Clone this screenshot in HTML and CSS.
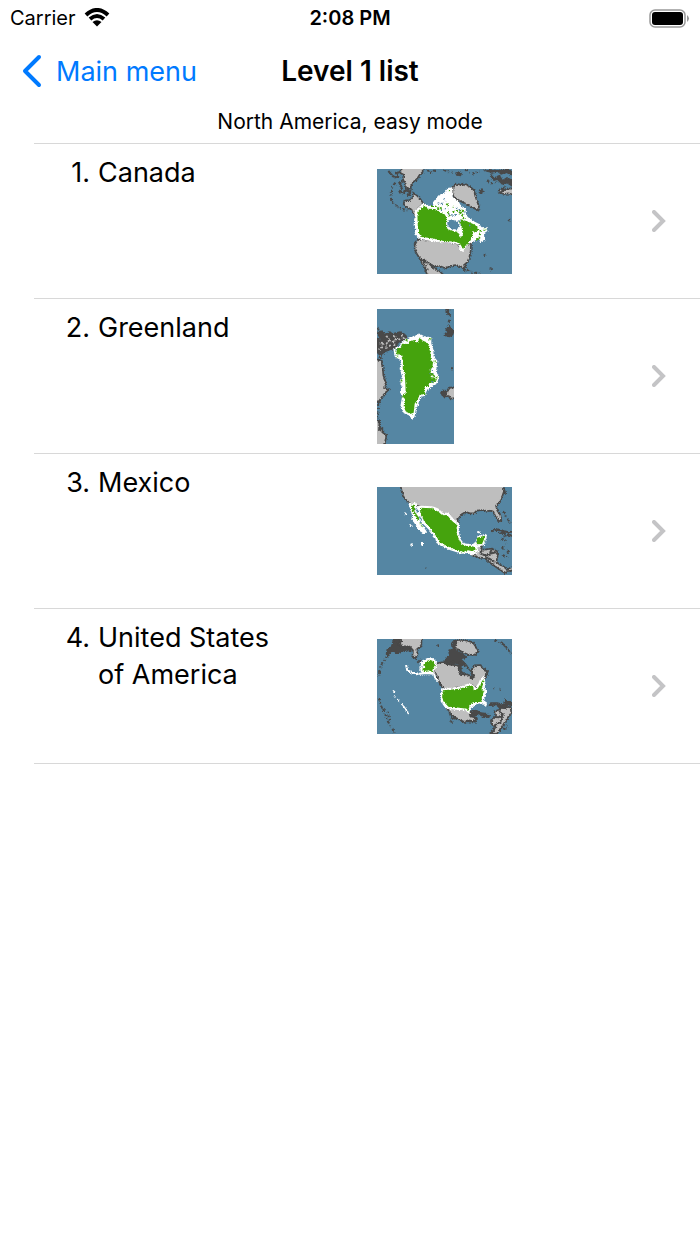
FILE: index.html
```
<!DOCTYPE html>
<html lang="en">
  <head>
    <meta charset="UTF-8" />
    <meta name="viewport" content="width=device-width, initial-scale=1.0" />
    <title>Level 1 list</title>
    <link rel="stylesheet" href="styles.css">
  </head>

  <body>
    <div class="status">
      <span class="carrier">Carrier
        <svg width="26" height="20" viewBox="0 0 26 20">
          <path class="arc" d="M2 7Q13-3 24 7M6 11Q13 5 20 11" />
          <path d="M8.500 14Q13 10.500 17.500 14L13 18.500Z" />
        </svg>
      </span>
      <strong class="time">2:08 PM</strong>
      <svg class="battery" width="41" height="19" viewBox="0 0 41 19">
        <rect x="1" y="1" width="35" height="17" rx="5" fill="none" stroke="#999" stroke-width="1.5" />
        <rect x="3" y="3" width="31" height="13" rx="3" />
        <path d="M38 6Q42 9.500 38 13Z" fill="#999" />
      </svg>
    </div>
    <nav class="navbar">
      <a class="back" href="#menu">
        <svg width="20" height="34" viewBox="0 0 20 34">
          <path d="M17 3L3 17L17 31" />
        </svg>
        Main menu
      </a>
      <h1>Level 1 list</h1>
    </nav>
    <main>
      <p class="subtitle">North America, easy mode</p>
      <ol class="countries">
        <li>
          <a class="row" href="#canada">
            <span class="num">1.</span>
            <span class="name">Canada</span>
            <svg class="map" width="135" height="105" viewBox="21 26 405 315">
              <!-- jagged coastlines, used by all four maps -->
              <filter id="rough" x="-5%" y="-5%" width="110%" height="110%">
                <feTurbulence type="turbulence" baseFrequency="0.25" numOctaves="2" seed="3" />
                <feDisplacementMap in="SourceGraphic" scale="4" xChannelSelector="R" yChannelSelector="G" />
              </filter>
              <path class="sea" d="M21 26H426V341H21Z" />
              <g class="coasts">
                <path class="land" d="M92 20L91 38L101 43L98 54L104 68L105 80L116 86L122 82L125 68L135 61L143 53L149 43L158 35L158 20Z" />
                <path class="coast" d="M55 32L66 45L75 51L84 48L77 37L91 35M98 60L88 67L96 83L89 93L102 97L105 86L116 96L121 91L119 101L111 105" />
                <path class="specks" d="M76 67L66 80L61 101L64 120L73 133L84 139L96 146L112 150" />
                <path class="land" d="M103 121L119 119L128 108L129 97L141 106L151 116L160 130L143 145L137 160L138 185L134 164L122 146L107 139L101 131Z" />
                <path class="land" d="M248 79L257 70L270 73L281 70L301 79L313 91L317 110L322 125L327 139L323 149L306 141L287 130L269 121L251 110L247 97Z" />
                <path class="dark" d="M255 37L267 33L276 39L273 48L259 46Z M327 88L337 83L341 94L332 101L326 98Z M363 39L374 50L389 43L398 58L411 50L430 60L430 81L410 69L396 73L382 59L371 62L359 47Z" />
                <path class="dark" d="M337 28L354 26L384 29L414 22L430 36L430 47L408 38L393 43L382 34L363 37L350 34Z" />
                <path class="land" d="M387 88L401 82L396 93L410 85L430 84V103L415 99L400 101L386 94Z" />
                <path class="specks" d="M172 26L178 37L190 31L199 31M220 30L247 35M285 27L302 42L328 32M350 60L366 68L376 65M414 181L423 171" />
                <path class="land" d="M145 235L134 248L134 268L143 285L149 294L161 298L173 306L184 313L195 318L210 317L224 323L239 317L256 314L275 320L283 327L281 315L292 305L298 290L302 273L303 249L308 242L290 252L275 266L260 248Z" />
                <path class="land" d="M149 295L161 319L173 346H223L207 331L188 320L177 309Z" />
                <path class="specks" d="M290 327L308 337L328 337M341 283L346 284M361 321L365 334M161 302L173 328M286 312L283 330" />
                <path class="white" d="M137 151L160 130L178 139L192 135L191 126L206 107L220 100L233 85L245 83L246 112L263 122L271 137L285 145L287 167L300 176L313 186L325 192L334 203L348 202L350 211L340 218L341 237L331 243L324 232L309 242L291 250L278 272L270 270L269 252L251 246L211 244L182 240L151 234L135 221L138 205L133 195Z" />
                <path class="green" d="M142 155L161 135L173 145L195 146L207 153L223 161L229 170L228 202L244 211L262 214L268 229L279 226L275 202L267 184L272 177L291 183L311 192L323 199L319 216L307 212L307 225L297 243L279 266L272 253L258 244L220 242L180 233L154 230L144 214Z" />
                <path class="green-specks" d="M183 137L201 137L206 146L215 142M229 130L235 135M237 90L240 91M231 153L238 168M247 153L265 151L276 164L279 150L269 148M278 175L287 169M318 207L332 211L327 237L314 234M340 208L346 208M248 139L251 139" />
                <path class="water outlined" d="M230 181L244 176L264 182L269 196L262 209L246 208L231 197Z" />
                <path class="water-specks" d="M203 128L223 130M212 148L232 144M222 112L224 124M234 160L249 165L265 160M258 141L272 151M266 180L271 193M285 153L282 164M297 197L304 190" />
              </g>
            </svg>
            <svg class="chevron" width="14" height="22" viewBox="0 0 14 22"><path d="M2 2L11 11L2 20" /></svg>
          </a>
        </li>
        <li>
          <a class="row" href="#greenland">
            <span class="num">2.</span>
            <span class="name">Greenland</span>
            <svg class="map" width="77" height="135" viewBox="21 27 231 405">
              <path class="sea" d="M21 27H252V432H21Z" />
              <g class="coasts">
                <path class="dark" d="M18 96L38 91L44 101L56 94L69 99L90 94L105 101L112 111L103 121L87 128L76 143L62 150L45 157L35 166L18 159V110L31 119Z" />
                <path class="grey-specks" d="M48 106L57 118L50 131L61 139M69 106L79 115L69 126L59 122M92 103L101 114L85 119M29 130L40 126L34 142L25 149M43 140L50 146M75 130L67 139" />
                <path class="land" d="M14 176L32 181L38 201L40 226L47 246L43 260L56 268L44 281L35 292L27 304H14Z" />
                <path class="land" d="M14 356L28 367L27 389L37 384L37 397L49 405L45 429L38 436H14Z" />
                <path class="specks" d="M22 82L27 91M26 171L39 171M25 309L22 340L28 367M46 249L41 269L55 267" />
                <path class="dark" d="M226 24L238 24L237 38L244 43L237 49L227 39Z M230 80L239 74L243 84L254 92L249 106L239 112L221 108L222 98L231 97Z" />
                <path class="specks" d="M238 59L234 74M225 86L242 103M243 203L246 207" />
                <path class="land" d="M258 262L237 263L231 274L218 271L213 279L222 290L236 288L241 296L258 294Z" />
                <path class="dark" d="M213 273L225 269L232 279L226 290L215 287Z" />
                <path class="white" d="M72 145L87 141L96 127L108 117L128 111L147 103L164 111L182 114L182 131L188 148L189 170L200 183L196 214L205 231L200 248L184 257L170 268L163 286L149 288L143 311L136 324L132 349L126 354L117 344L103 338L93 320L98 291L92 274L97 259L91 243L99 228L91 207L95 180L76 169Z" />
                <path class="green" d="M76 145L92 143L96 131L113 132L119 123L134 120L140 128L150 112L156 121L173 128L179 150L183 164L182 179L189 187L187 203L179 206L180 217L191 220L181 231L199 234L195 244L178 249L174 259L165 257L162 272L167 281L149 284L144 296L134 311L131 338L120 342L107 334L101 318L104 299L97 284L107 278L106 248L104 222L98 207L99 185L93 164L82 162Z" />
                <path class="green-specks" d="M79 153L82 170M176 117L182 118M93 239L96 247M98 286L97 294M191 184L200 184M188 225L202 232M107 119L113 122" />
                <path class="water-specks" d="M181 207L188 211M178 222L190 220M184 246L193 240M77 147L84 147" />
              </g>
            </svg>
            <svg class="chevron" width="14" height="22" viewBox="0 0 14 22"><path d="M2 2L11 11L2 20" /></svg>
          </a>
        </li>
        <li>
          <a class="row" href="#mexico">
            <span class="num">3.</span>
            <span class="name">Mexico</span>
            <svg class="map" width="135" height="88" viewBox="21 24 405 264">
              <path class="sea" d="M21 24H426V288H21Z" />
              <g class="coasts">
                <path class="land" d="M91 16L96 41L103 58L117 70L136 79L155 84L188 85L208 98L222 107L237 106L250 122L264 132L262 119L273 107L287 99L300 103L313 102L320 95L338 93L352 96L362 95L370 98L376 112L387 127L394 125L391 108L382 95L378 80L387 69L396 54L401 40L397 16Z" />
                <path class="coast" d="M362 157L374 150L388 153L402 157L415 160L430 157M384 161L405 162M401 171L415 167L430 172M400 24L406 44" />
                <path class="specks" d="M399 97L407 112L400 116M413 119L420 133M377 154L392 151M392 180L402 178L408 192M397 201L398 215M396 228L409 232L416 209M167 266L169 267" />
                <path class="land" d="M307 229L316 222L315 206L325 200L336 201L333 212L341 212L366 209L381 217L383 231L379 249L390 257L401 262L410 271L430 263V275L411 276L404 282L388 271L374 261L361 252L344 237L328 236Z" />
                <path class="coast" d="M333 211L332 224L342 228L359 224L378 220M344 231L356 238L373 248M366 210L360 221" />
                <path class="white" d="M117 73L134 71L139 84L152 82L188 84L205 91L220 106L233 101L250 121L265 134L264 158L270 181L280 195L302 198L318 191L324 172L347 167L348 174L340 196L329 199L319 206L323 214L312 223L304 227L296 219L275 222L242 212L201 191L197 174L178 151L158 131L143 113L147 130L158 142L168 158L161 162L147 151L134 130L125 120L129 111L123 91Z" />
                <path class="green" d="M150 86L187 88L207 100L217 109L231 108L247 127L260 137L260 164L272 193L286 201L303 200L313 204L317 209L308 217L294 214L277 218L245 208L207 189L202 176L183 151L164 128L151 106Z M321 176L343 170L342 181L336 195L319 196Z M122 77L132 77L134 98L148 117L145 123L134 109L125 94Z M138 111L145 121L138 122Z M149 129L157 143L150 140Z" />
                <path class="water" d="M139 87L146 96L143 102L135 90Z M146 112L152 113L158 127L151 123Z" />
                <path class="white-specks" d="M105 103L108 104M120 139L122 139M124 196L125 197M156 190V197M324 159L327 160M191 172L194 174" />
              </g>
            </svg>
            <svg class="chevron" width="14" height="22" viewBox="0 0 14 22"><path d="M2 2L11 11L2 20" /></svg>
          </a>
        </li>
        <li>
          <a class="row" href="#usa">
            <span class="num">4.</span>
            <span class="name">United States of America</span>
            <svg class="map" width="135" height="95" viewBox="21 30 405 285">
              <path class="sea" d="M21 30H426V315H21Z" />
              <g class="coasts">
                <path class="specks" d="M53 80L38 98L29 119L24 145M26 206L33 230L43 254L54 278L68 300L71 312M39 238L54 250L58 276M373 31L402 47L424 75M392 37L411 58" />
                <path class="dark" d="M50 60L64 49L69 26H90L94 38L87 48L96 55L108 59L123 54L125 69L113 64L94 69L80 75L68 65L59 75L52 85L47 76Z" />
                <path class="land" d="M82 22L94 37L84 45L99 51L119 53L129 64L127 83L135 89L143 75L139 62L154 49L155 22Z" />
                <path class="coast" d="M73 36L86 33L82 44L101 56L120 56M153 91L142 101" />
                <path class="land" d="M245 44L252 35L271 32L292 35L308 40L316 51L323 67L313 78L295 77L276 69L264 61L248 59Z" />
                <path class="land" d="M196 104L219 99L240 107L264 109L269 135L293 137L307 148L313 139L302 128L312 109L332 108L340 121L351 126L343 147L333 165L322 177L303 167L268 174L224 181L211 168L200 140L190 124Z" />
                <path class="dark" d="M244 43L255 32L262 41L253 61L265 66L281 75L292 86L275 90L285 101L277 110L258 104L244 107L228 108L220 94L228 84L236 76L235 62L249 57Z M199 47L207 46V52L199 52Z" />
                <path class="dark" d="M264 98L280 96L291 107L300 122L308 130L313 144L306 152L294 138L281 137L270 131Z" />
                <path class="water" d="M275 109L288 113L301 128L304 138L285 133L275 126Z" />
                <path class="coast" d="M207 159L216 174M343 116L352 131L343 151M251 98L230 101" />
                <path class="land" d="M231 237L242 255L257 266L269 272L283 279L297 274L315 278L319 266L301 262L297 246L282 239L256 238Z" />
                <path class="dark" d="M298 246L310 242L321 243L333 250L349 252L362 261L353 267L336 260L323 255L315 263L305 262L299 258Z M313 264L324 267L318 277L308 276Z" />
                <path class="land" d="M421 231L407 236L394 231L388 242L373 247L376 260L363 274L364 287L375 290L372 305L361 312L380 315L399 288L415 263L424 252Z" />
                <path class="dark" d="M404 206L413 216L430 217V231L414 229L405 240L388 239L378 229L365 231L351 229L362 220L382 220L399 224Z" />
                <path class="coast" d="M388 245L397 257L386 265L374 264M399 253L391 280L379 283L369 301M240 253L244 266L257 269M283 279L294 274M293 278L309 276" />
                <path class="specks" d="M389 179L393 179M370 179L372 178M240 275L246 280M377 294L361 309M400 301L411 288M335 264L350 263" />
                <path class="white-specks small" d="M70 185L74 188M72 200L75 204M82 211L86 216M94 224L103 235M104 236L115 254" />
                <path class="white-line" d="M108 108L112 124L128 131L148 134L171 132L192 133L195 145L205 157" />
                <path class="white" d="M157 96L171 90L182 87L196 94L195 105L199 109L190 122L188 135L178 133L158 131L150 122L157 112L151 104Z" />
                <path class="green" d="M169 97L179 92L191 97L195 108L189 119L185 129L176 124L159 127L157 119L166 115L160 106Z" />
                <path class="white" d="M215 180L266 175L300 164L317 177L327 164L332 151L341 143L344 160L339 173L347 185L342 203L336 212L349 222L346 230L336 219L311 226L299 239L297 251L287 242L253 240L227 235L215 218L212 197Z" />
                <path class="green" d="M219 184L269 179L300 169L310 172L311 184L323 179L334 160L341 149L337 172L334 183L342 186L336 203L333 218L309 220L298 229L296 245L290 239L256 235L235 233L220 217L216 200Z" />
                <path class="white-specks small" d="M153 98L150 117M298 239L308 229L317 224" />
              </g>
            </svg>
            <svg class="chevron" width="14" height="22" viewBox="0 0 14 22"><path d="M2 2L11 11L2 20" /></svg>
          </a>
        </li>
      </ol>
    </main>
  </body>
</html>
```
FILE: styles.css
```
body {
  margin: 0;
  background: #fff;
  color: #000;
  font-family: Inter, "Liberation Sans", sans-serif;
  font-size: 27px;
}
a {
  color: inherit;
  text-decoration: none;
}
.status,
.navbar {
  display: grid;
  grid-template-columns: 1fr auto 1fr;
  align-items: center;
}
.status {
  height: 36px;
  padding: 0 10px;
  font-size: 20px;
}
.carrier {
  display: flex;
  align-items: center;
  gap: 8px;
}
.arc {
  fill: none;
  stroke: #000;
  stroke-width: 4;
}
.time {
  font-weight: 600;
}
.battery {
  justify-self: end;
}
.navbar {
  height: 70px;
  padding: 0 22px;
}
.navbar h1 {
  margin: 0;
  font-size: 28px;
  font-weight: 600;
}
.back {
  display: flex;
  align-items: center;
  gap: 14px;
  color: #007aff;
}
.back path {
  fill: none;
  stroke: #007aff;
  stroke-width: 4;
  stroke-linecap: round;
  stroke-linejoin: round;
}
.subtitle {
  margin: 0;
  line-height: 32px;
  padding-bottom: 5px;
  font-size: 21px;
  text-align: center;
}
.countries {
  margin: 0 0 0 34px;
  padding: 0;
  list-style: none;
  border-top: 1px solid #d8d8d8;
}
.countries li {
  border-bottom: 1px solid #d8d8d8;
}
.row {
  display: grid;
  grid-template-columns: 56px 1fr 1fr 14px;
  column-gap: 8px;
  align-items: center;
  min-height: 154px;
  padding-right: 34px;
  line-height: 37px;
}
.num,
.name {
  align-self: start;
  padding-top: 10px;
}
.num {
  text-align: right;
}
.name {
  padding-right: 72px;
}
.map {
  margin-left: 2px;
}
.chevron path {
  fill: none;
  stroke: #c4c4c6;
  stroke-width: 4;
  stroke-linecap: round;
}

/* maps */
.coasts {
  filter: url(#rough);
}
.sea,
.water {
  fill: #5586a3;
}
.land {
  fill: #bebebe;
  stroke: #484848;
  stroke-width: 5;
}
.dark {
  fill: #484848;
}
.green {
  fill: #45a311;
}
.white {
  fill: #fff;
  stroke: #fff;
  stroke-width: 4;
}
.outlined {
  stroke: #fff;
  stroke-width: 3;
}
.coast,
.specks,
.grey-specks,
.green-specks,
.water-specks,
.white-specks,
.white-line {
  fill: none;
  stroke: #484848;
  stroke-width: 6;
}
.specks {
  stroke-dasharray: 9 5 4 7;
}
.grey-specks {
  stroke: #bebebe;
  stroke-width: 5;
  stroke-dasharray: 8 4;
}
.green-specks {
  stroke: #45a311;
  stroke-dasharray: 6 5;
}
.water-specks {
  stroke: #5586a3;
  stroke-width: 4;
  stroke-dasharray: 5 5;
}
.white-specks {
  stroke: #fff;
  stroke-linecap: round;
}
.small {
  stroke-width: 4;
}
.white-line {
  stroke: #fff;
}
```
